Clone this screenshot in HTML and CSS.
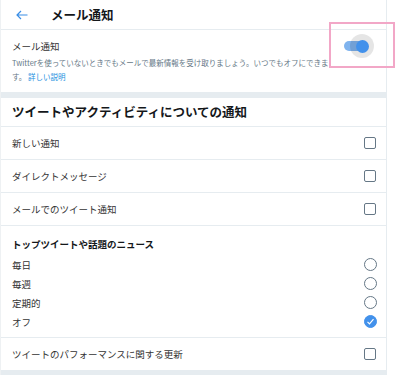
FILE: index.html
```html
<!DOCTYPE html>
<html lang="ja">

<head>
    <meta charset="UTF-8">
    <meta name="viewport" content="width=device-width, initial-scale=1.0">
    <title>メール通知</title>
    <link rel="stylesheet" href="styles.css">
</head>

<body>
    <div class="page">
        <header class="topbar">
            <svg class="back" width="12" height="10" viewBox="0 0 12 10">
                <path d="M11.5 5H1 M5 1L1 5l4 4" fill="none" stroke="#3a8ee6" stroke-width="1.2" />
            </svg>
            <h1>メール通知</h1>
        </header>

        <section class="mail-block">
            <div class="mail-row">
                <span class="label">メール通知</span>
                <div class="toggle">
                    <span class="track"></span>
                    <span class="halo"></span>
                    <span class="thumb"></span>
                </div>
                <div class="highlight"></div>
            </div>
            <p class="desc">Twitterを使っていないときでもメールで最新情報を受け取りましょう。いつでもオフにできます。 <a href="#">詳しい説明</a></p>
        </section>

        <div class="band"></div>

        <h2 class="section-title">ツイートやアクティビティについての通知</h2>

        <div class="row">
            <span>新しい通知</span>
            <span class="checkbox"></span>
        </div>
        <div class="row">
            <span>ダイレクトメッセージ</span>
            <span class="checkbox"></span>
        </div>
        <div class="row">
            <span>メールでのツイート通知</span>
            <span class="checkbox"></span>
        </div>

        <div class="group">
            <h3>トップツイートや話題のニュース</h3>
            <div class="option"><span>毎日</span><span class="radio"></span></div>
            <div class="option"><span>毎週</span><span class="radio"></span></div>
            <div class="option"><span>定期的</span><span class="radio"></span></div>
            <div class="option">
                <span>オフ</span>
                <span class="radio checked">
                    <svg width="9" height="9" viewBox="0 0 9 9">
                        <path d="M1.5 4.8l2 2 4-4.6" fill="none" stroke="#fff" stroke-width="1.2" />
                    </svg>
                </span>
            </div>
        </div>

        <div class="row">
            <span>ツイートのパフォーマンスに関する更新</span>
            <span class="checkbox"></span>
        </div>

        <div class="band"></div>
    </div>
</body>

</html>
```

FILE: styles.css
```css
body {
    margin: 0;
    font-family: "Noto Sans CJK JP", "Noto Sans", sans-serif;
    color: #14171a;
    background: #fff;
}

.page {
    width: 385px;
    border-left: 1px solid #eef1f3;
    border-right: 1px solid #e6ecf0;
}

.topbar {
    height: 29px;
    display: flex;
    align-items: center;
    border-bottom: 1px solid #e6ecf0;
}

.back {
    margin-left: 15px;
    margin-right: 23px;
}

.topbar h1 {
    margin: 0;
    font-size: 12.5px;
    font-weight: bold;
}

.mail-block {
    padding: 8px 10px 8px 11px;
}

.mail-row {
    position: relative;
    display: flex;
    align-items: center;
    justify-content: space-between;
    height: 16px;
}

.label {
    font-size: 9.5px;
    color: #333;
}

.toggle {
    position: relative;
    width: 34px;
    height: 24px;
}

.track {
    position: absolute;
    left: 2px;
    top: 7px;
    width: 20px;
    height: 10px;
    border-radius: 5px;
    background: #7fb3ee;
}

.halo {
    position: absolute;
    left: 8px;
    top: 0;
    width: 24px;
    height: 24px;
    border-radius: 50%;
    background: rgba(0, 0, 0, 0.1);
}

.thumb {
    position: absolute;
    left: 13.5px;
    top: 5.5px;
    width: 13px;
    height: 13px;
    border-radius: 50%;
    background: #4291eb;
}

.highlight {
    position: absolute;
    right: -19px;
    top: -16px;
    width: 62px;
    height: 42px;
    border: 2px solid #f2a7c7;
}

.desc {
    margin: 2px 39px 0 0;
    font-size: 7.5px;
    line-height: 14px;
    color: #657786;
}

.desc a {
    color: #1b8fe0;
    text-decoration: none;
}

.band {
    height: 6px;
    background: #e6ecf0;
}

.section-title {
    margin: 0;
    height: 28px;
    line-height: 28px;
    padding-left: 11px;
    font-size: 12.5px;
    font-weight: bold;
    border-bottom: 1px solid #e6ecf0;
}

.row {
    height: 32px;
    display: flex;
    align-items: center;
    justify-content: space-between;
    padding: 0 10px 0 11px;
    font-size: 9.5px;
    color: #333;
    border-bottom: 1px solid #e6ecf0;
}

.row:last-of-type {
    border-bottom: none;
}

.checkbox {
    width: 10px;
    height: 10px;
    border: 1.5px solid #657786;
    border-radius: 2px;
}

.group {
    padding: 9px 9px 6px 11px;
    border-bottom: 1px solid #e6ecf0;
}

.group h3 {
    margin: 0 0 2px;
    font-size: 9.5px;
    line-height: 18px;
    font-weight: bold;
}

.option {
    height: 19px;
    display: flex;
    align-items: center;
    justify-content: space-between;
    font-size: 9.5px;
    color: #333;
}

.radio {
    width: 11px;
    height: 11px;
    border: 1.2px solid #657786;
    border-radius: 50%;
    display: flex;
    align-items: center;
    justify-content: center;
}

.radio.checked {
    border-color: #4291eb;
    background: #4291eb;
}
```
